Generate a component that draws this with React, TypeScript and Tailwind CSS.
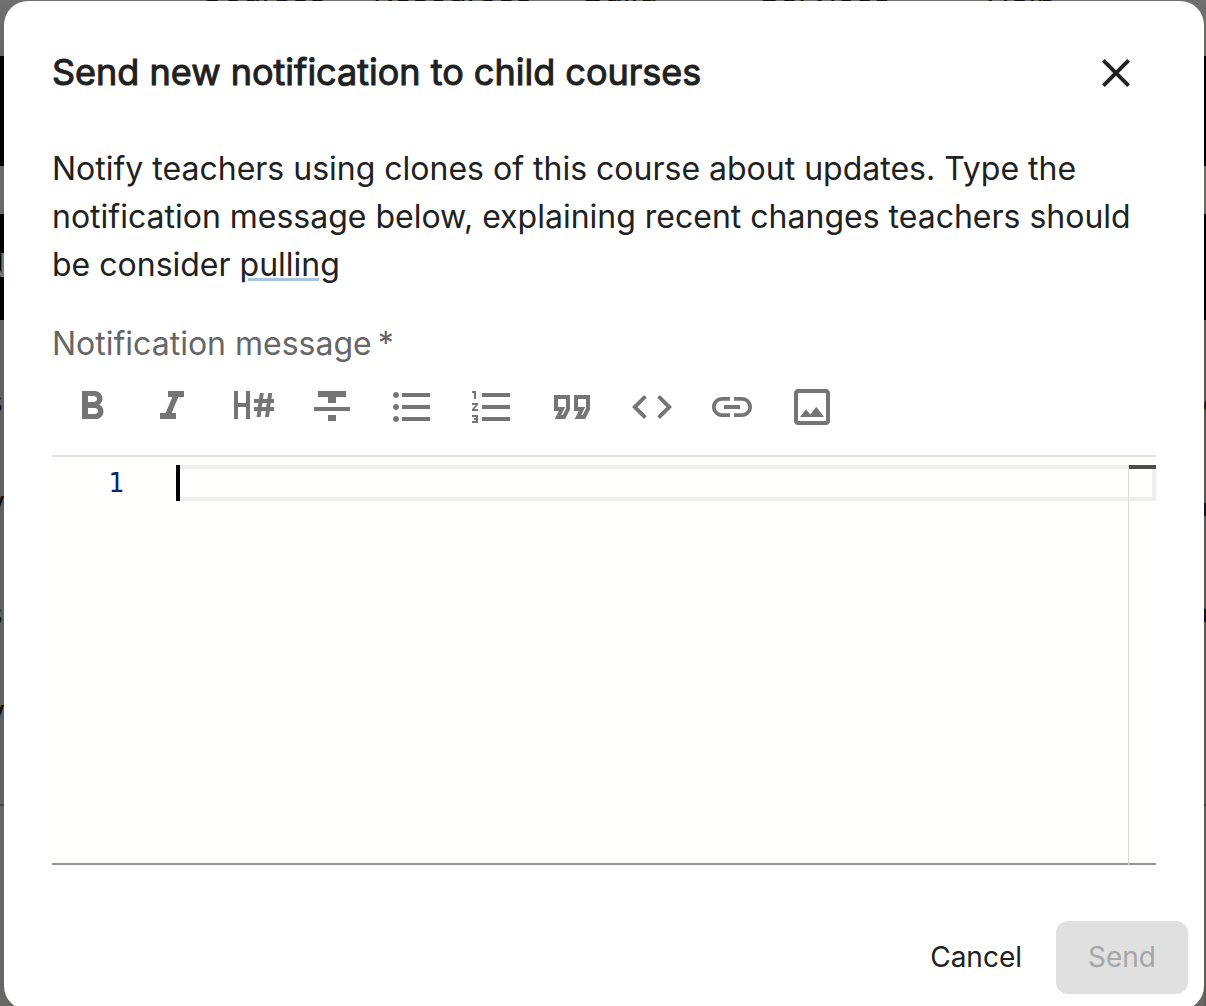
import React from 'react';

const icons: string[] = [
  'M15.6 10.79c.97-.67 1.65-1.77 1.65-2.79 0-2.26-1.75-4-4-4H7v14h7.04c2.09 0 3.71-1.7 3.71-3.79 0-1.52-.86-2.82-2.15-3.42zM10 6.5h3c.83 0 1.5.67 1.5 1.5s-.67 1.5-1.5 1.5h-3v-3zm3.5 9H10v-3h3.5c.83 0 1.5.67 1.5 1.5s-.67 1.5-1.5 1.5z',
  'M10 4v3h2.21l-3.42 8H6v3h8v-3h-2.21l3.42-8H18V4z',
  'M3 4h2v6h4V4h2v14H9v-6H5v6H3zM15.9 5h2l-.4 3h2.2l.4-3h2l-.4 3H23v2h-1.6l-.3 2H23v2h-2.1l-.4 3h-2l.4-3h-2.2l-.4 3h-2l.4-3H13v-2h1.9l.3-2H13V8h2.5zM17.2 10l-.3 2h2.2l.3-2z',
  'M10 19h4v-3h-4v3zM5 4v3h5v3h4V7h5V4H5zM3 14h18v-2H3v2z',
  'M4 10.5c-.83 0-1.5.67-1.5 1.5s.67 1.5 1.5 1.5 1.5-.67 1.5-1.5-.67-1.5-1.5-1.5zm0-6c-.83 0-1.5.67-1.5 1.5S3.17 7.5 4 7.5 5.5 6.83 5.5 6 4.83 4.5 4 4.5zm0 12c-.83 0-1.5.68-1.5 1.5s.68 1.5 1.5 1.5 1.5-.68 1.5-1.5-.67-1.5-1.5-1.5zM7 19h14v-2H7v2zm0-6h14v-2H7v2zm0-8v2h14V5H7z',
  'M2 17h2v.5H3v1h1v.5H2v1h3v-4H2v1zm1-9h1V4H2v1h1v3zm-1 3h1.8L2 13.1v.9h3v-1H3.2L5 10.9V10H2v1zm5-6v2h14V5H7zm0 14h14v-2H7v2zm0-6h14v-2H7v2z',
  'M18.62 18h-5.24l2-4H13V6h8v7.24L18.62 18zm-2-2h.76L19 12.76V8h-4v4h3.62l-2 4zm-8 2H3.38l2-4H3V6h8v7.24L8.62 18zm-2-2h.76L9 12.76V8H5v4h3.62l-2 4z',
  'M9.4 16.6L4.8 12l4.6-4.6L8 6l-6 6 6 6 1.4-1.4zm5.2 0l4.6-4.6-4.6-4.6L16 6l6 6-6 6-1.4-1.4z',
  'M3.9 12c0-1.71 1.39-3.1 3.1-3.1h4V7H7c-2.76 0-5 2.24-5 5s2.24 5 5 5h4v-1.9H7c-1.71 0-3.1-1.39-3.1-3.1zM8 13h8v-2H8v2zm9-6h-4v1.9h4c1.71 0 3.1 1.39 3.1 3.1s-1.39 3.1-3.1 3.1h-4V17h4c2.76 0 5-2.24 5-5s-2.24-5-5-5z',
  'M19 5v14H5V5h14m0-2H5c-1.1 0-2 .9-2 2v14c0 1.1.9 2 2 2h14c1.1 0 2-.9 2-2V5c0-1.1-.9-2-2-2zm-4.86 8.86l-3 3.87L9 13.14 6 17h12l-3.86-5.14z',
];

/* Dimmed page behind the dialog */
function Backdrop() {
  return (
    <div className="absolute inset-0 flex flex-col overflow-hidden text-[32px] leading-[48px] text-[#111]">
      <div className="h-[56px] shrink-0 bg-linear-to-b from-[#707070] to-[#666664]" />
      <div className="h-[110px] shrink-0 bg-black" />
      <div className="h-[48px] shrink-0 bg-[#6b6a68]" />
      <div className="h-[106px] shrink-0 bg-black" />
      <div className="h-[484px] shrink-0 bg-[#636160]" />
      <div className="h-[2px] shrink-0 bg-[#484746]" />
      <div className="grow bg-[#686766]" />
      <span className="absolute left-[200px] top-[-33px]">Courses</span>
      <span className="absolute left-[373px] top-[-33px]">Resources</span>
      <span className="absolute left-[583px] top-[-33px]">Build</span>
      <span className="absolute left-[759px] top-[-33px]">Services</span>
      <span className="absolute left-[986px] top-[-33px]">Help</span>
      <span className="absolute right-[1199px] top-[242px] text-[#777]">N</span>
      <span className="absolute right-[1203px] top-[378px]">s</span>
      <span className="absolute right-[1201px] top-[479px]">y</span>
      <span className="absolute right-[1203px] top-[590px]">s</span>
      <span className="absolute right-[1201px] top-[688px]">y</span>
      <span className="absolute left-[1203px] top-[380px] text-2xl leading-[48px]">e</span>
      <span className="absolute left-[1202px] top-[484px] text-2xl leading-[48px]">r</span>
      <span className="absolute left-[1202px] top-[590px] text-2xl leading-[48px]">n</span>
      <div className="absolute right-0 top-[320px] h-[686px] w-[2px] bg-black/10" />
    </div>
  );
}

export default function App() {
  return (
    <div className="relative h-[1006px] w-[1206px] overflow-hidden font-['Inter',sans-serif] text-[#212121]">
      <Backdrop />
      <div className="relative ml-1 mt-px flex h-[1009px] w-[1200px] flex-col rounded-3xl bg-white">
        <header className="flex h-[144px] shrink-0 items-center justify-between pl-12 pr-16">
          <h2 className="-mt-0.5 whitespace-nowrap text-[36px] font-normal leading-[48px] [-webkit-text-stroke:1px_#212121]">Send new notification to child courses</h2>
          <svg className="size-12" viewBox="0 0 24 24" fill="currentColor">
            <path d="M19 6.41L17.59 5 12 10.59 6.41 5 5 6.41 10.59 12 5 17.59 6.41 19 12 13.41 17.59 19 19 17.59 13.41 12z" />
          </svg>
        </header>
        <p className="h-[144px] shrink-0 whitespace-nowrap px-12 text-[32px] leading-[48px]">
          Notify teachers using clones of this course about updates. Type the
          <br />
          notification message below, explaining recent changes teachers should
          <br />
          be consider{' '}
          <span className="relative">
            pulling
            <span className="absolute bottom-[3px] left-2 h-[3px] w-[71px] bg-[#a5c4e0]" />
          </span>
        </p>
        <label className="mt-[31px] flex h-12 shrink-0 gap-1.5 pl-12 text-[32px] leading-[48px] text-[#666]">
          <span>Notification message</span>
          <span>*</span>
        </label>
        <section className="mx-12 mt-[15px] shrink-0">
          <div className="flex h-[74px] gap-8 border-b-2 border-[#e0e0e0] pl-4 text-[#757575]">
            {icons.map((d) => (
              <svg key={d} className="size-12 shrink-0" viewBox="0 0 24 24" fill="currentColor">
                <path d={d} />
              </svg>
            ))}
          </div>
          <div className="relative h-[408px] border-b-2 border-[#949494] bg-[#fffffe] pt-2">
            <div className="flex h-9">
              <span className="w-[124px] shrink-0 pr-[52px] text-right font-['DejaVu_Sans_Mono',monospace] text-[26px] leading-[36px] text-[#0b216f]">1</span>
              <div className="w-1 bg-black" />
              <div className="grow border-y-4 border-r-4 border-[#eee]" />
            </div>
            <div className="absolute bottom-[-2px] right-[27px] top-2 w-px bg-[#d9d9d9]" />
            <div className="absolute right-0 top-2 h-1 w-[27px] bg-[#4c4c4c]" />
          </div>
        </section>
        <footer className="mt-[56px] flex h-[73px] shrink-0 items-center justify-end gap-[34px] pr-4 text-[28px]">
          <button className="pb-0.5">Cancel</button>
          <button className="h-[73px] w-[132px] rounded-xl bg-[#e0e0e0] pb-0.5 text-[#a6a6a6]">Send</button>
        </footer>
      </div>
    </div>
  );
}
